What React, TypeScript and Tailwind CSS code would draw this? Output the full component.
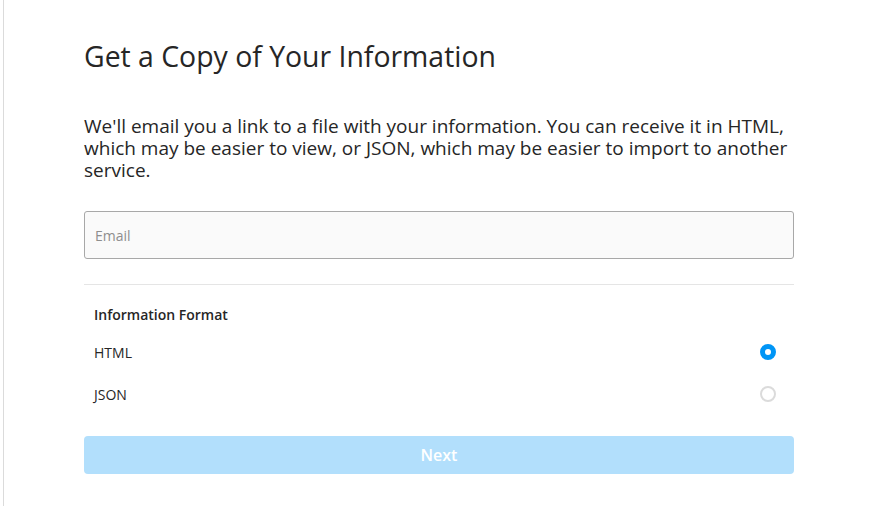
import React, { useState } from 'react';

export default function App() {
  const [format, setFormat] = useState('HTML');
  const [email, setEmail] = useState('');

  return (
    <div className="min-h-[506px] bg-white pl-[3px]" style={{ fontFamily: '"Open Sans", sans-serif' }}>
      <div className="min-h-[506px] border-l border-[#dbdbdb] pl-[80px] pr-[76px] pt-[38px] text-[#262626]">
        <h1 className="text-[28.4px] leading-[36px] font-normal">Get a Copy of Your Information</h1>

        <p className="mt-[41px] text-[19px] leading-[22px]">
          We'll email you a link to a file with your information. You can receive it in HTML, which may be easier to view, or JSON, which may be easier to import to another service.
        </p>

        <input
          type="email"
          value={email}
          onChange={(e) => setEmail(e.target.value)}
          placeholder="Email"
          className="mt-[30px] block h-[48px] w-full rounded-[3px] border border-[#a8a8a8] bg-[#fafafa] px-[10px] text-[14px] outline-none placeholder:text-[#8e8e8e]"
        />

        <div className="mt-[25px] border-t border-[#e5e5e5]" />

        <div className="px-[10px] pt-[21px]">
          <div className="text-[14px] font-semibold leading-[18px]">Information Format</div>
          <div className="mt-[17px] flex flex-col gap-[20px]">
            {['HTML', 'JSON'].map((f) => (
              <label key={f} className="flex h-[22px] cursor-pointer items-center justify-between pr-[8px] text-[14px]">
                <span>{f}</span>
                <input
                  type="radio"
                  name="format"
                  checked={format === f}
                  onChange={() => setFormat(f)}
                  className="sr-only"
                />
                <span
                  className={
                    format === f
                      ? 'h-[16px] w-[16px] rounded-full border-[5px] border-[#0095f6] bg-white'
                      : 'h-[16px] w-[16px] rounded-full border-[2px] border-[#dbdbdb] bg-white'
                  }
                />
              </label>
            ))}
          </div>
        </div>

        <button
          disabled={!email}
          className="mt-[31px] block h-[38px] w-full rounded-[4px] bg-[#b2dffc] text-[16px] font-semibold text-white"
        >
          Next
        </button>
      </div>
    </div>
  );
}
